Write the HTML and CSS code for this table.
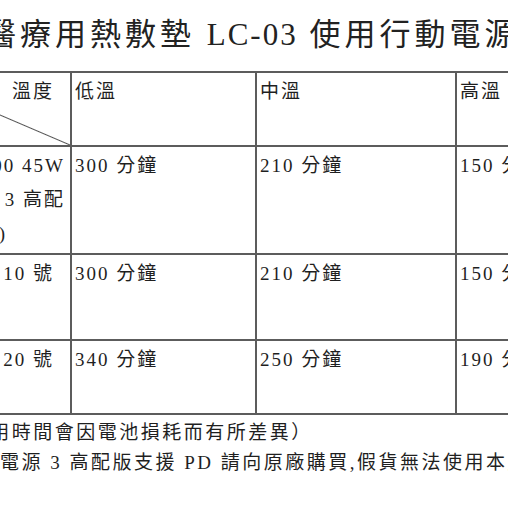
FILE: index.html
```html
<!DOCTYPE html>
<html lang="zh-Hant">
<head>
<meta charset="utf-8">
<title>醫療用熱敷墊 LC-03 使用行動電源時間</title>
<link rel="stylesheet" href="styles.css">
</head>
<body>
<div class="page">
  <h1 class="title">醫療用熱敷墊 <span class="lat">LC-03</span> 使用行動電源時間表</h1>
  <table class="grid">
    <colgroup>
      <col class="c1"><col class="c2"><col class="c3"><col class="c4">
    </colgroup>
    <tr class="r-head">
      <td class="first diag"><div class="head-r">溫度</div></td>
      <td>低溫</td>
      <td>中溫</td>
      <td>高溫</td>
    </tr>
    <tr class="r-pd">
      <td class="first">
        <div class="ln-a">PD 100 45W</div>
        <div class="ln-a">行動電源 3 高配</div>
        <div class="ln-b">(版)</div>
      </td>
      <td>300 分鐘</td>
      <td>210 分鐘</td>
      <td>150 分鐘</td>
    </tr>
    <tr class="r-10">
      <td class="first"><div class="ln-c">行動電源 10 號</div></td>
      <td>300 分鐘</td>
      <td>210 分鐘</td>
      <td>150 分鐘</td>
    </tr>
    <tr class="r-20">
      <td class="first"><div class="ln-c">行動電源 20 號</div></td>
      <td>340 分鐘</td>
      <td>250 分鐘</td>
      <td>190 分鐘</td>
    </tr>
  </table>
  <p class="note note-1">(使用時間會因電池損耗而有所差異）</p>
  <p class="note note-2">行動電源 3 高配版支援 PD 請向原廠購買,假貨無法使用本產品</p>
</div>
</body>
</html>
```

FILE: styles.css
```css
html, body {
  margin: 0;
  padding: 0;
  width: 508px;
  height: 508px;
  overflow: hidden;
  background: #ffffff;
}

.page {
  color: #1f1f1f;
  font-family: "Liberation Serif", "Noto Sans CJK TC", serif;
  white-space: nowrap;
}

.title {
  margin: 15px 0 0 -15px;
  font-size: 31px;
  font-weight: 400;
  line-height: 40px;
  letter-spacing: 4px;
  color: #222;
}

.title .lat {
  letter-spacing: 2px;
}

.grid {
  margin: 16px 0 0 -100px;
  border-collapse: collapse;
  table-layout: fixed;
  width: 705px;
  font-size: 19px;
  line-height: 34px;
  letter-spacing: 2px;
}

.c1 { width: 170px; }
.c2 { width: 185px; }
.c3 { width: 200px; }
.c4 { width: 150px; }

.grid td {
  border: 2px solid #5c5c5c;
  vertical-align: top;
  padding: 2px 4px 0 3px;
  overflow: hidden;
}

.r-head td { height: 70px; }
.r-pd td { height: 104px; }
.r-10 td { height: 82px; }
.r-20 td { height: 70px; }

.grid td.first {
  text-align: right;
  padding-right: 0;
}

.diag {
  background: linear-gradient(to top right,
    transparent calc(50% - 1px),
    #555 50%,
    transparent calc(50% + 1px));
}

.head-r,
.ln-c {
  padding-right: 16px;
}

.ln-a {
  padding-right: 5px;
}

.ln-b {
  padding-right: 63px;
}

.note {
  margin: 0;
  font-size: 19px;
  letter-spacing: 2.5px;
  line-height: 28px;
}

.note-1 {
  margin: 4px 0 0 -40px;
}

.note-2 {
  margin: 2px 0 0 -43px;
}
```
